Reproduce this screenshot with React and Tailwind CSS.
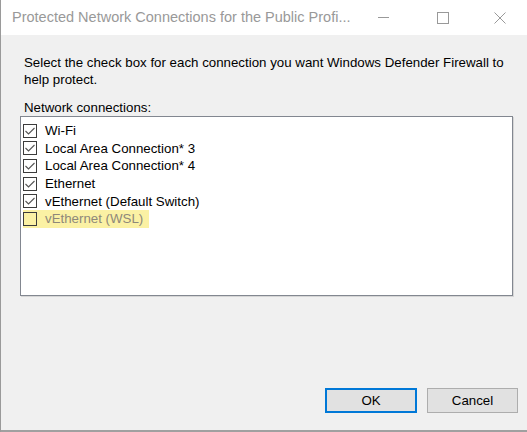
const ITEMS = [
  { label: "Wi-Fi", checked: true },
  { label: "Local Area Connection* 3", checked: true },
  { label: "Local Area Connection* 4", checked: true },
  { label: "Ethernet", checked: true },
  { label: "vEthernet (Default Switch)", checked: true },
  { label: "vEthernet (WSL)", checked: false, marked: true },
];

function CheckBox({ checked }) {
  return (
    <span className="w-[14px] h-[14px] border border-[#3c3c3c] flex items-center justify-center shrink-0">
      {checked && (
        <svg width="12" height="12" viewBox="0 0 12 12">
          <path d="M1.5 6 L4.5 9 L10.5 3" stroke="#555" strokeWidth="1.1" fill="none" />
        </svg>
      )}
    </span>
  );
}

export default function App() {
  return (
    <div className="w-[527px] h-[432px] flex flex-col bg-[#f0f0f0] border-l border-[#9a9a9a] font-['Liberation_Sans',sans-serif] overflow-hidden">
      {/* Title bar */}
      <div className="h-[35px] bg-white flex items-center shrink-0">
        <div className="pl-[11px] flex-1 min-w-0 text-[14.5px] text-[#999] whitespace-nowrap overflow-hidden">
          Protected Network Connections for the Public Profi...
        </div>
        <div className="flex items-center h-full shrink-0">
          <div className="w-[58px] h-full flex items-center justify-center">
            <div className="w-[11px] h-px bg-[#999]" />
          </div>
          <div className="w-[62px] h-full flex items-center justify-center">
            <div className="w-[12px] h-[12px] border border-[#999]" />
          </div>
          <div className="w-[52px] h-full flex items-center justify-center">
            <svg width="12" height="12" viewBox="0 0 12 12">
              <path d="M0.5 0.5 L11.5 11.5 M11.5 0.5 L0.5 11.5" stroke="#999" strokeWidth="1" />
            </svg>
          </div>
          <div className="w-[1px]" />
        </div>
      </div>

      {/* Body */}
      <div className="flex-1 flex flex-col px-[19px] pt-[19px] text-[13.3px] text-black">
        <p className="pl-[4px] leading-[17px]">
          Select the check box for each connection you want Windows Defender Firewall to help protect.
        </p>
        <p className="pl-[4px] mt-[11px] leading-[17px]">Network connections:</p>
        <div className="w-[493px] h-[180px] bg-white border border-[#828790] shadow-[1px_1px_0_#d6d6d6] pt-[5px] pl-[2px]">
          {ITEMS.map((item) => (
            <div key={item.label} className="flex items-center h-[17.6px]">
              <div className={item.marked ? "inline-flex items-center gap-[8px] bg-[#fbf1a4] pr-[6px] h-[18px]" : "inline-flex items-center gap-[8px]"}>
                <CheckBox checked={item.checked} />
                <span className={item.marked ? "text-[#8e887a] leading-[15px]" : "leading-[15px]"}>{item.label}</span>
              </div>
            </div>
          ))}
        </div>

        <div className="flex-1" />

        <div className="flex justify-end gap-[10px] -mr-[10px] mb-[17px]">
          <button className="w-[92px] h-[25px] bg-[#e1e1e1] border-2 border-[#0078d7] text-[13.3px]">OK</button>
          <button className="w-[91px] h-[25px] bg-[#e1e1e1] border border-[#adadad] text-[13.3px]">Cancel</button>
        </div>
      </div>
      <div className="h-[2px] bg-[#a0a0a0] shrink-0" />
    </div>
  );
}
